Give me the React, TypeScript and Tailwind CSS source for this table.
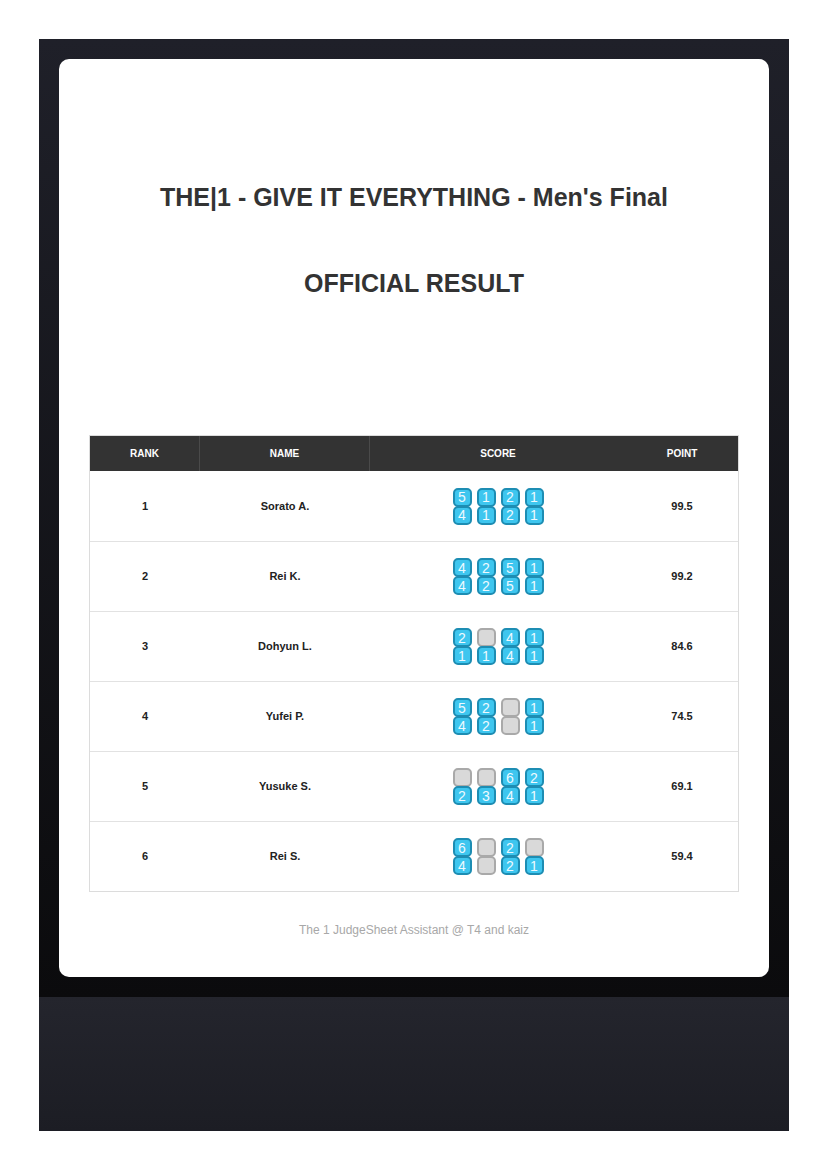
import React from "react";

type Row = { rank: number; name: string; top: (number | null)[]; bottom: (number | null)[]; point: string };

const rows: Row[] = [
  { rank: 1, name: "Sorato A.", top: [5, 1, 2, 1], bottom: [4, 1, 2, 1], point: "99.5" },
  { rank: 2, name: "Rei K.", top: [4, 2, 5, 1], bottom: [4, 2, 5, 1], point: "99.2" },
  { rank: 3, name: "Dohyun L.", top: [2, null, 4, 1], bottom: [1, 1, 4, 1], point: "84.6" },
  { rank: 4, name: "Yufei P.", top: [5, 2, null, 1], bottom: [4, 2, null, 1], point: "74.5" },
  { rank: 5, name: "Yusuke S.", top: [null, null, 6, 2], bottom: [2, 3, 4, 1], point: "69.1" },
  { rank: 6, name: "Rei S.", top: [6, null, 2, null], bottom: [4, null, 2, 1], point: "59.4" },
];

function Box({ v }: { v: number | null }) {
  if (v === null) {
    return <div className="w-[19px] h-[19px] rounded-[5px] border-2 border-[#a9a9a9] bg-[#d9d9d9]" />;
  }
  return (
    <div className="w-[19px] h-[19px] rounded-[5px] border-2 border-[#1d8db3] bg-[#3ec6ef] flex items-center justify-center text-[14px] font-normal leading-none text-[#eefaff]">
      {v}
    </div>
  );
}

export default function App() {
  return (
    <div className="w-[827px] h-[1170px] bg-white p-[39px]" style={{ fontFamily: '"Liberation Sans", Arial, sans-serif' }}>
      <div className="w-[750px] h-[1092px] flex flex-col">
        <div className="h-[958px] p-[20px] bg-gradient-to-b from-[#1f2029] to-[#0b0b0d]">
          <div className="h-[918px] bg-white rounded-[10px] flex flex-col px-[30px]">
            <div className="pt-[124px] text-center text-[25px] font-bold text-[#333] leading-[28px]">
              THE|1 - GIVE IT EVERYTHING - Men's Final
            </div>
            <div className="pt-[58px] text-center text-[25px] font-bold text-[#333] leading-[28px]">
              OFFICIAL RESULT
            </div>
            <div className="mt-[138px] border border-[#dcdcdc]">
              <div className="flex h-[35px] bg-[#333333] text-white text-[10px] font-bold items-stretch">
                <div className="w-[110px] flex items-center justify-center border-r border-[#4a4a4a]">RANK</div>
                <div className="w-[170px] flex items-center justify-center border-r border-[#4a4a4a]">NAME</div>
                <div className="w-[256px] flex items-center justify-center">SCORE</div>
                <div className="flex-1 flex items-center justify-center">POINT</div>
              </div>
              {rows.map((r, i) => (
                <div key={i} className={`flex h-[70px] items-center text-[11px] font-bold text-[#222] ${i > 0 ? "border-t border-[#e2e2e2]" : ""}`}>
                  <div className="w-[110px] text-center">{r.rank}</div>
                  <div className="w-[170px] text-center">{r.name}</div>
                  <div className="w-[256px] flex flex-col items-center">
                    <div className="flex gap-[5px]">
                      {r.top.map((v, j) => (
                        <Box key={j} v={v} />
                      ))}
                    </div>
                    <div className="flex gap-[5px] -mt-[1px]">
                      {r.bottom.map((v, j) => (
                        <Box key={j} v={v} />
                      ))}
                    </div>
                  </div>
                  <div className="flex-1 text-center">{r.point}</div>
                </div>
              ))}
            </div>
            <div className="mt-[29px] text-center text-[12px] text-[#a8a8a8]">
              The 1 JudgeSheet Assistant @ T4 and kaiz
            </div>
          </div>
        </div>
        <div className="flex-1 bg-gradient-to-b from-[#24252d] to-[#1c1d24]" />
      </div>
    </div>
  );
}
